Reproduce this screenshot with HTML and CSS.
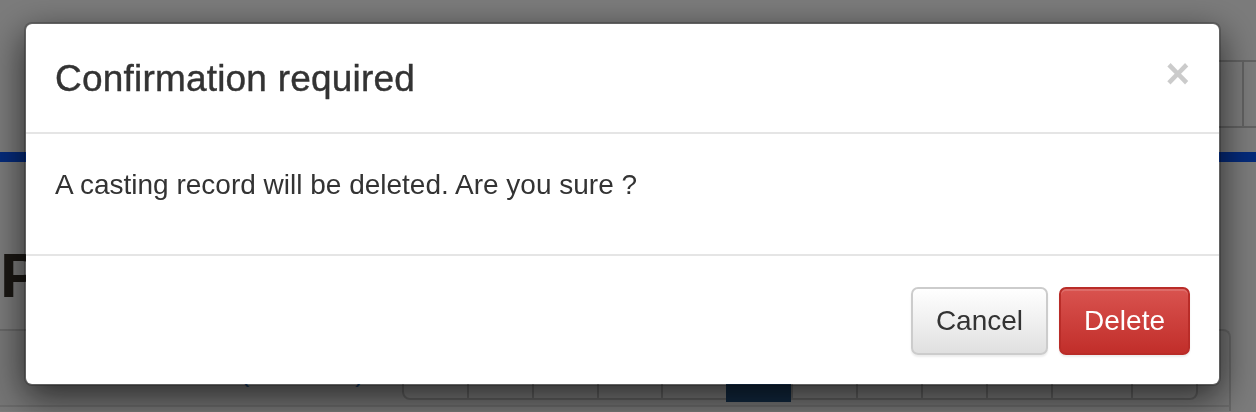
FILE: index.html
```html
<!DOCTYPE html>
<html lang="en">
<head>
<meta charset="utf-8">
<title>Confirmation required</title>
<link rel="stylesheet" href="styles.css">
</head>
<body>
<div class="page">
  <div class="toolbar">
    <div class="tb-box">
      <div class="tb-cell"></div>
      <div class="tb-tail"></div>
    </div>
  </div>
  <div class="bluebar"></div>
  <h1 class="page-title">Plan</h1>
  <div class="panel">
    <div class="panel-head">
      <span class="count">(12 items)</span>
      <div class="pager">
        <span class="pg-cell"></span>
        <span class="pg-cell"></span>
        <span class="pg-cell"></span>
        <span class="pg-cell"></span>
        <span class="pg-cell"></span>
        <span class="pg-cell pg-active"></span>
        <span class="pg-cell"></span>
        <span class="pg-cell"></span>
        <span class="pg-cell"></span>
        <span class="pg-cell"></span>
        <span class="pg-cell pg-wide"></span>
        <span class="pg-cell"></span>
      </div>
    </div>
    <div class="panel-body"></div>
  </div>
</div>

<div class="backdrop"></div>

<div class="modal">
  <div class="modal-header">
    <h4 class="modal-title">Confirmation required</h4>
    <button class="close" type="button">×</button>
  </div>
  <div class="modal-body">
    <p>A casting record will be deleted. Are you sure ?</p>
  </div>
  <div class="modal-footer">
    <button class="btn btn-default" type="button">Cancel</button>
    <button class="btn btn-danger" type="button">Delete</button>
  </div>
</div>
</body>
</html>
```

FILE: styles.css
```css
html, body {
  margin: 0;
  padding: 0;
}

body {
  width: 1256px;
  height: 412px;
  overflow: hidden;
  background: #f6f6f6;
  font-family: "Liberation Sans", Arial, sans-serif;
  color: #333;
}

.page {
  display: flex;
  flex-direction: column;
}

/* top toolbar (mostly behind the dialog) */
.toolbar {
  display: flex;
  justify-content: flex-end;
  margin-top: 60px;
}

.tb-box {
  display: flex;
  height: 64px;
  border-top: 2px solid #c4c4c4;
  border-bottom: 2px solid #c4c4c4;
  border-left: 2px solid #c4c4c4;
}

.tb-cell {
  width: 140px;
  border-right: 2px solid #c4c4c4;
}

.tb-tail {
  width: 12px;
}

.bluebar {
  margin-top: 24px;
  height: 10px;
  background: #0a55f5;
}

.page-title {
  margin: 79px 0 0 0;
  font-size: 63px;
  line-height: 69px;
  font-weight: bold;
  color: #342e26;
  white-space: nowrap;
}

/* panel with pager */
.panel {
  margin-top: 19px;
  width: 1229px;
  border-top: 2px solid #cfcfcf;
  border-right: 2px solid #cfcfcf;
  border-top-right-radius: 8px;
  background: #ededed;
}

.panel-head {
  display: flex;
  align-items: flex-end;
  height: 69px;
  padding: 0 31px 5px 240px;
  border-bottom: 2px solid #d6d6d6;
}

.count {
  font-size: 28px;
  line-height: 40px;
  margin-bottom: 8px;
  color: #3a74b4;
  white-space: nowrap;
}

.pager {
  margin-left: auto;
  display: flex;
  width: 796px;
  height: 56px;
  box-sizing: border-box;
  border: 2px solid #c2c2c2;
  border-radius: 8px;
  background: #f4f4f4;
}

.pg-cell {
  flex: 1;
  border-left: 2px solid #c2c2c2;
}

.pg-cell:first-child {
  border-left: none;
}

.pg-wide {
  flex: 1.25;
}

.pg-active {
  background: #245280;
  margin-bottom: -4px;
  margin-top: -2px;
  border-left-color: #245280;
}

.panel-body {
  height: 4px;
  background: #f0f0f0;
}

/* overlay */
.backdrop {
  position: fixed;
  inset: 0;
  background: rgba(0, 0, 0, 0.5);
}

.modal {
  position: fixed;
  left: 24px;
  top: 22px;
  width: 1193px;
  background: #fff;
  border: 2px solid rgba(0, 0, 0, 0.2);
  border-radius: 8px;
  background-clip: padding-box;
  box-shadow: 0 12px 36px rgba(0, 0, 0, 0.65);
  font-family: "Liberation Sans", Arial, sans-serif;
  color: #333;
}

.modal-header {
  display: flex;
  align-items: center;
  justify-content: space-between;
  padding: 29px 29px 28px 29px;
  border-bottom: 2px solid #e5e5e5;
}

.modal-title {
  margin: 0;
  font-size: 37px;
  line-height: 51px;
  font-weight: normal;
  letter-spacing: 0.2px;
  -webkit-text-stroke: 0.4px #333;
  color: #333;
}

.close {
  padding: 0;
  margin: -10px 0 0 0;
  border: 0;
  background: transparent;
  font-family: "Liberation Sans", Arial, sans-serif;
  font-size: 42px;
  font-weight: bold;
  line-height: 42px;
  color: #000;
  opacity: 0.2;
}

.modal-body {
  padding: 31px 29px 29px;
}

.modal-body p {
  margin: 0 0 20px;
  font-size: 28px;
  line-height: 40px;
}

.modal-footer {
  display: flex;
  justify-content: flex-end;
  gap: 11px;
  padding: 31px 29px 29px;
  border-top: 2px solid #e5e5e5;
}

.btn {
  font-family: "Liberation Sans", Arial, sans-serif;
  font-size: 28px;
  line-height: 40px;
  padding: 12px 23px;
  border: 2px solid transparent;
  border-radius: 7px;
  cursor: pointer;
}

.btn-default {
  color: #333;
  background: linear-gradient(to bottom, #ffffff 0%, #e0e0e0 100%);
  border-color: #ccc;
  box-shadow: inset 0 2px 0 rgba(255, 255, 255, 0.15), 0 2px 2px rgba(0, 0, 0, 0.075);
}

.btn-danger {
  color: #fff;
  background: linear-gradient(to bottom, #d9534f 0%, #c12e2a 100%);
  border-color: #b92c28;
  box-shadow: inset 0 2px 0 rgba(255, 255, 255, 0.15), 0 2px 2px rgba(0, 0, 0, 0.075);
}
```
